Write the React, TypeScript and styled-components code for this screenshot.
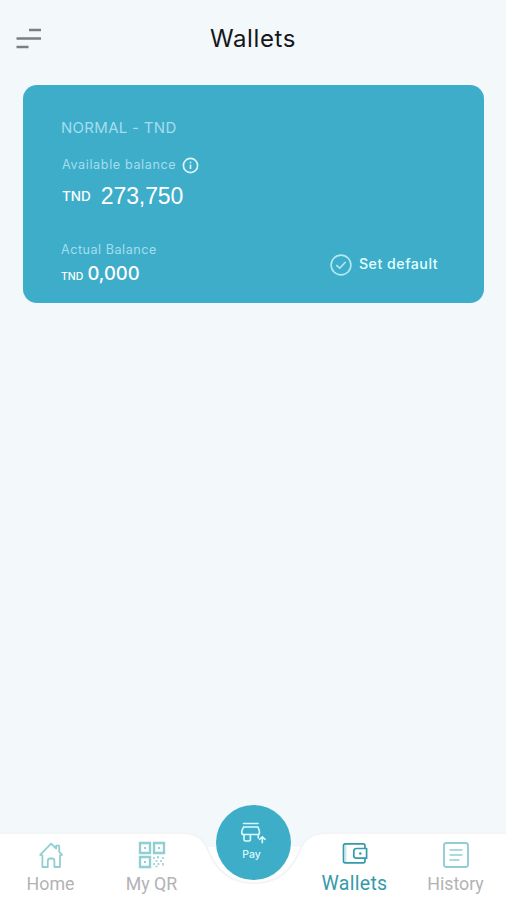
import React from "react";
import styled, { createGlobalStyle } from "styled-components";

const Global = createGlobalStyle`
  * { box-sizing: border-box; }
  body { margin: 0; background: #f3f8fb; }
`;

const Screen = styled.div`
  width: 506px;
  height: 900px;
  display: flex;
  flex-direction: column;
  overflow: hidden;
  background: #f3f8fb;
  font-family: Inter, sans-serif;
`;

const Header = styled.header`
  height: 85px;
  flex: none;
  display: grid;
  grid-template-columns: 60px 1fr 60px;
  align-items: start;
  svg { margin: 28px 0 0 16px; }
`;

const Title = styled.h1`
  margin: 23px 0 0;
  text-align: center;
  font-size: 24px;
  line-height: 31px;
  font-weight: 400;
  letter-spacing: 0.6px;
  color: #15171a;
`;

const Card = styled.section`
  width: 461px;
  height: 218px;
  flex: none;
  margin-left: 23px;
  padding: 33px 46px 0 38px;
  border-radius: 14px;
  background: #3dadca;
  display: flex;
  flex-direction: column;
`;

const Text = styled.span<{ $size: number; $color?: string; $weight?: number; $spacing?: number; $family?: string }>`
  font-size: ${(p) => p.$size}px;
  line-height: 20px;
  white-space: nowrap;
  color: ${(p) => p.$color ?? "#fff"};
  font-weight: ${(p) => p.$weight ?? 400};
  letter-spacing: ${(p) => p.$spacing ?? 0}px;
  font-family: ${(p) => p.$family ?? "inherit"};
`;

const Line = styled.div<{ $gap?: number; $top?: number; $indent?: number; $align?: string }>`
  display: flex;
  height: 20px;
  align-items: ${(p) => p.$align ?? "baseline"};
  gap: ${(p) => p.$gap ?? 0}px;
  margin-top: ${(p) => p.$top ?? 0}px;
  margin-left: ${(p) => p.$indent ?? 0}px;
`;

const CardFooter = styled.div`
  display: flex;
  justify-content: space-between;
  align-items: flex-start;
  margin-top: 34px;
`;

const DefaultButton = styled.button`
  display: flex;
  gap: 7px;
  align-items: center;
  height: 24px;
  margin: 13px 0 0;
  padding: 0;
  border: 0;
  background: none;
  font-family: inherit;
  span { margin-top: -3px; }
`;

const Spacer = styled.div`
  flex: 1;
`;

const NavBar = styled.nav`
  position: relative;
  height: 96px;
  flex: none;
  display: grid;
  grid-template-columns: 101px 101px 102px 101px 101px;
`;

const NavShape = styled.svg`
  position: absolute;
  inset: 0;
`;

const Tab = styled.a<{ $active?: boolean }>`
  position: relative;
  display: flex;
  flex-direction: column;
  align-items: center;
  padding-top: 37px;
  color: ${(p) => (p.$active ? "#359ba8" : "#b2b3b4")};
  font: 400 ${(p) => (p.$active ? 19.5 : 17.8)}px/22px Roboto, sans-serif;
  letter-spacing: ${(p) => (p.$active ? 0.3 : 0)}px;
`;

const TabIcon = styled.span`
  height: 28px;
  flex: none;
  margin-bottom: 4px;
  svg { display: block; }
`;

const PayButton = styled.button`
  position: relative;
  justify-self: center;
  width: 75px;
  height: 75px;
  margin: 1px 0 0;
  padding: 15px 0 0;
  border: 0;
  border-radius: 50%;
  background: #3dadc8;
  display: flex;
  flex-direction: column;
  align-items: center;
  font-family: inherit;
  span { line-height: 14px; margin-top: 4px; margin-right: 3px; }
`;

const pale = "#a6dded";
const mint = "#91cfd3";

const MenuIcon = () => (
  <svg width="26" height="22" fill="none" stroke="#7c7f82" strokeWidth="2.4">
    <path d="M13 2H25M0.5 10.5H25M0.5 19H12.5" />
  </svg>
);

const InfoIcon = () => (
  <svg width="17" height="17" fill="none" stroke="#dcf6f7">
    <circle cx="8.5" cy="8.5" r="7.1" strokeWidth="1.7" />
    <path d="M8.5 7.5V12M8.5 4.7V6.2" strokeWidth="1.6" />
  </svg>
);

const CheckIcon = () => (
  <svg width="22" height="22" fill="none" stroke="#b2eaf2" strokeWidth="1.6">
    <circle cx="11" cy="11" r="9.9" />
    <path d="M6.2 11.2L9.8 14.2L15.6 8" />
  </svg>
);

const HomeIcon = () => (
  <svg width="26" height="28" fill="none" stroke={mint} strokeWidth="1.8" strokeLinejoin="round" strokeLinecap="round">
    <path d="M4.4 14.3V26H9.8V20Q9.8 17.5 12 17.5H14.2Q16.4 17.5 16.4 20V26H22V14.3M4.4 14.3L2.1 13.8L13.1 2.6L18.2 7.5V4.7H21.2V10.6L24 13.8L22 14.3" />
  </svg>
);

const QrIcon = () => (
  <svg width="28" height="28" viewBox="0 0 28 28" fill="none" stroke={mint} strokeWidth="2.4">
    <path d="M2 2H12V12H2ZM16 2H26V12H16ZM2 16H12V26H2Z" />
    <path d="M6 7H8M20 7H22M6 21H8" strokeWidth="2" />
    <path d="M15 17H17M20 15V17.5M24 17H26M17.5 20H19.5M22 20H24M15 23H17M20.5 22V24M25 22V24.5M17.5 25.5H19.5" strokeWidth="1.6" />
  </svg>
);

const StoreIcon = () => (
  <svg width="26" height="24" viewBox="0 0 26 24" fill="none" stroke="#dcfcff" strokeWidth="1.6" strokeLinejoin="round" strokeLinecap="round">
    <path d="M3.5 3.5H18M3.5 7H18L19.4 11V12.7Q19.4 14.5 17.6 14.5H3.6Q1.8 14.5 1.8 12.7V11ZM4 14.5V19.5Q4 21 5.5 21H9Q10.4 21 10.4 19.5V14.5M18.3 14.5V18M22.3 22.7V17.5M19.6 19.3L22.3 16.9L25 19.3" />
  </svg>
);

const WalletIcon = () => (
  <svg width="26" height="28" fill="none" stroke="#359ba8" strokeWidth="1.7" strokeLinejoin="round">
    <path d="M23 7.5V4.7Q23 2.8 21.1 2.8H3.2Q1.5 2.8 1.5 4.7V20Q1.5 21.8 3.2 21.8H21.1Q23 21.8 23 20V17.2" />
    <path d="M3.8 3V21.6" strokeWidth="0.7" opacity="0.5" />
    <path d="M24.6 7.5H14.5Q11.8 7.5 11.8 10.2V14.5Q11.8 17.2 14.5 17.2H24.6Z" />
    <circle cx="18.3" cy="12.5" r="1.3" fill="#359ba8" stroke="none" />
  </svg>
);

const HistoryIcon = () => (
  <svg width="28" height="28" fill="none" stroke={mint} strokeWidth="1.9">
    <rect x="2" y="2" width="24" height="24" rx="2.5" />
    <path d="M7.5 9H20.5M7.5 14H20.5M7.5 19H17.5" strokeWidth="1.6" />
  </svg>
);

export default function App() {
  return (
    <Screen>
      <Global />
      <Header>
        <MenuIcon />
        <Title>Wallets</Title>
      </Header>
      <Card>
        <Line><Text $size={15} $color={pale} $spacing={0.3}>NORMAL - TND</Text></Line>
        <Line $top={17} $gap={6} $indent={1} $align="center">
          <Text $size={12.6} $color={pale} $spacing={0.62}>Available balance</Text>
          <InfoIcon />
        </Line>
        <Line $top={11} $gap={10} $indent={1} $align="center">
          <Text $size={13.5} $weight={500}>TND</Text>
          <Text $size={23} $spacing={-0.1} $family='"Liberation Sans", sans-serif'>273,750</Text>
        </Line>
        <CardFooter>
          <div>
            <Line><Text $size={12.6} $color={pale} $spacing={0.52}>Actual Balance</Text></Line>
            <Line $gap={4} $top={3}>
              <Text $size={10.5} $weight={500}>TND</Text>
              <Text $size={18.5} $weight={500}>0,000</Text>
            </Line>
          </div>
          <DefaultButton>
            <CheckIcon />
            <Text $size={14.2} $weight={500} $spacing={0.5} $color="#e2ffff">Set default</Text>
          </DefaultButton>
        </CardFooter>
      </Card>
      <Spacer />
      <NavBar>
        <NavShape width="506" height="96" aria-hidden="true">
          <path d="M0 29.5H180C196 29.5 203 34 206 43H302C306 34 312 29.5 328 29.5H506V96H0Z" fill="#fff" />
          <path d="M0 29H180C207 29 205 44 213 56C221 70 233 79 254 79S287 70 295 56C303 44 301 29 328 29H506" fill="none" stroke="#f2f4f6" strokeWidth="2" />
        </NavShape>
        <Tab><TabIcon><HomeIcon /></TabIcon>Home</Tab>
        <Tab><TabIcon><QrIcon /></TabIcon>My QR</Tab>
        <PayButton>
          <StoreIcon />
          <Text $size={10.5} $weight={500} $color="#dcfcff">Pay</Text>
        </PayButton>
        <Tab $active><TabIcon><WalletIcon /></TabIcon>Wallets</Tab>
        <Tab><TabIcon><HistoryIcon /></TabIcon>History</Tab>
      </NavBar>
    </Screen>
  );
}
